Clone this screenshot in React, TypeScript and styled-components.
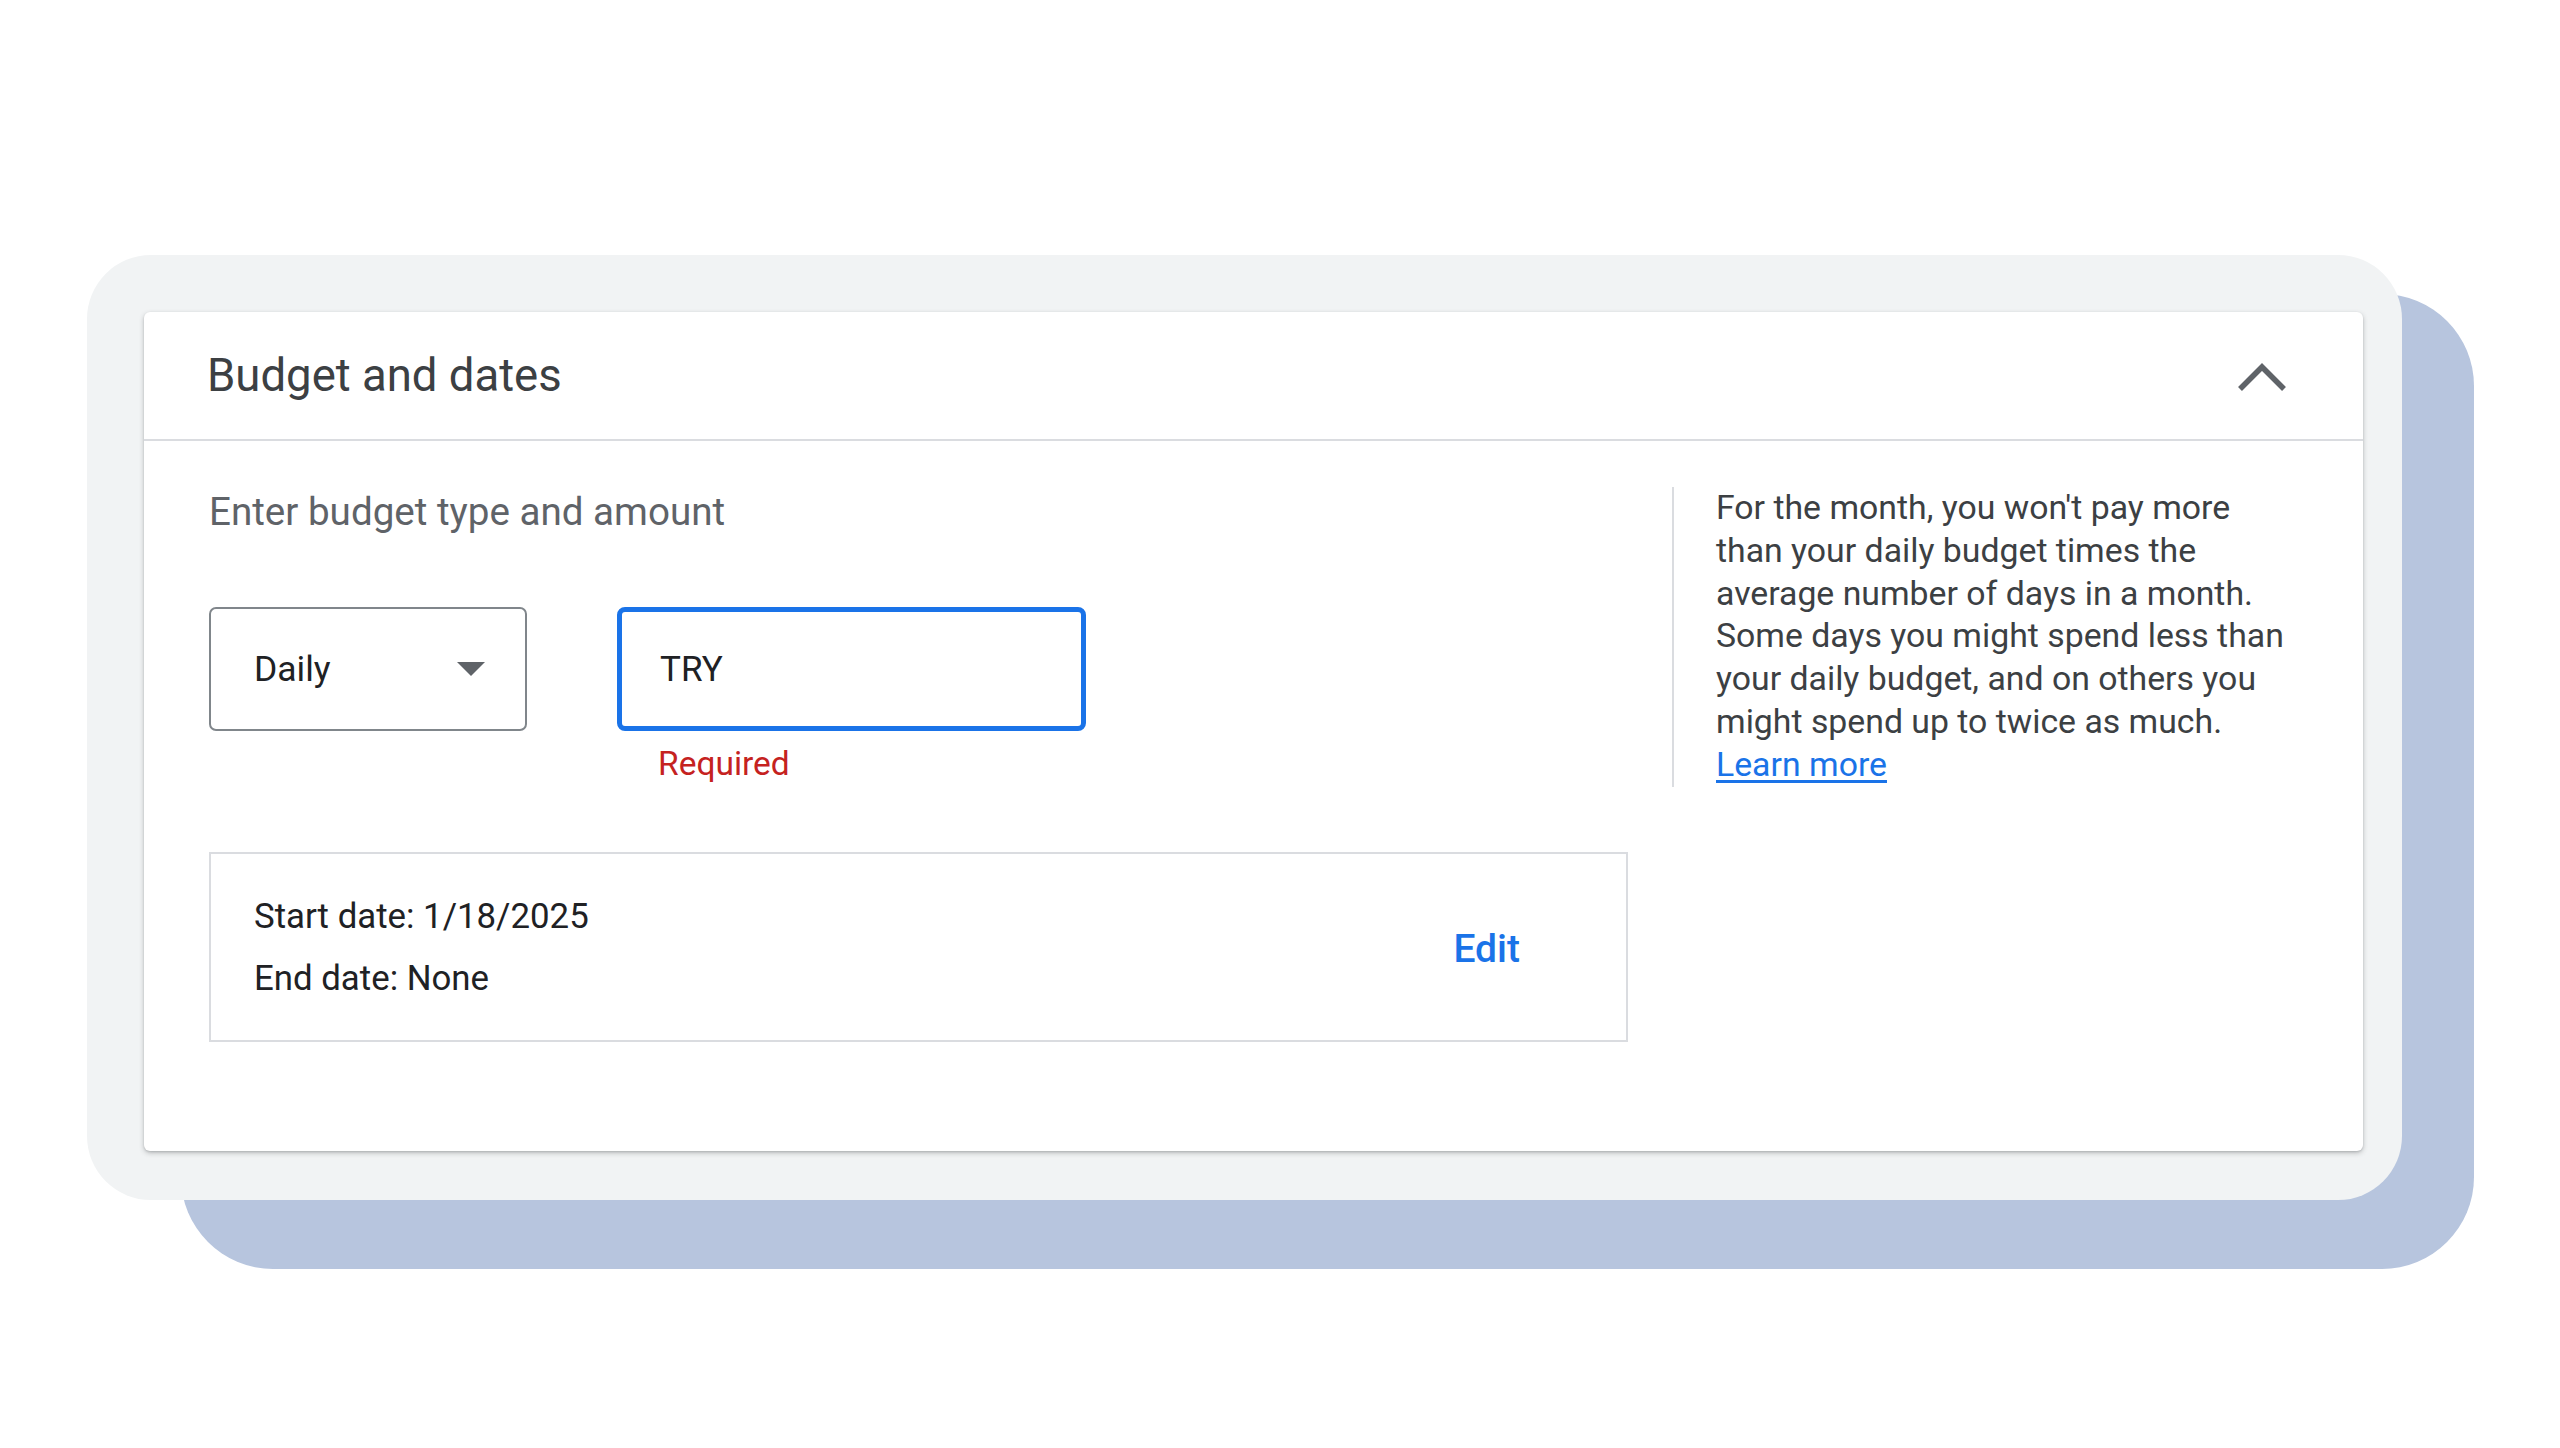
import React from "react";
import styled, { createGlobalStyle } from "styled-components";

const Global = createGlobalStyle`
  html, body {
    margin: 0;
    padding: 0;
    background: #ffffff;
    font-family: Roboto, "Liberation Sans", Arial, sans-serif;
  }
  * { box-sizing: border-box; }
`;

const Page = styled.div`
  min-height: 1448px;
  padding: 255px 0 0 87px;
`;

const Stack = styled.div`
  position: relative;
  width: 2315px;
`;

const Backdrop = styled.div`
  position: absolute;
  left: 94px;
  top: 39px;
  right: -72px;
  bottom: -69px;
  background: #b7c5de;
  border-radius: 92px;
  z-index: 0;
`;

const Panel = styled.section`
  position: relative;
  z-index: 1;
  background: #f1f3f4;
  border-radius: 64px;
  padding: 57px 39px 49px 57px;
`;

const Card = styled.div`
  background: #ffffff;
  border-radius: 6px;
  box-shadow: 0 2px 5px rgba(60, 64, 67, 0.3), 0 1px 2px rgba(60, 64, 67, 0.15);
`;

const Header = styled.div`
  display: flex;
  align-items: center;
  justify-content: space-between;
  height: 129px;
  padding: 0 75px 0 63px;
  border-bottom: 2px solid #dadce0;
`;

const Title = styled.h2`
  margin: 0;
  font-family: Roboto, "Liberation Sans", sans-serif;
  font-weight: 400;
  font-size: 45.5px;
  line-height: 1;
  color: #3c4043;
`;

const CollapseButton = styled.button`
  display: flex;
  align-items: center;
  justify-content: center;
  width: 52px;
  height: 40px;
  padding: 0;
  border: none;
  background: none;
  color: #5f6368;
`;

const Body = styled.div`
  display: flex;
  align-items: flex-start;
  padding: 46px 69px 109px 65px;
`;

const LeftCol = styled.div`
  width: 1419px;
  display: flex;
  flex-direction: column;
`;

const Subtitle = styled.p`
  margin: 0;
  font-size: 38.6px;
  line-height: 49px;
  color: #5f6368;
`;

const FieldRow = styled.div`
  display: flex;
  align-items: flex-start;
  gap: 90px;
  margin-top: 71px;
`;

const Select = styled.div`
  width: 318px;
  height: 124px;
  display: flex;
  align-items: center;
  justify-content: space-between;
  padding: 0 40px 0 43px;
  border: 2px solid #80868b;
  border-radius: 7px;
  font-size: 35.5px;
  color: #202124;
`;

const AmountField = styled.div`
  display: flex;
  flex-direction: column;
`;

const InputBox = styled.div`
  width: 469px;
  height: 124px;
  display: flex;
  align-items: center;
  padding-left: 38px;
  border: 5px solid #1a73e8;
  border-radius: 8px;
  font-size: 35px;
  color: #202124;
`;

const ErrorText = styled.div`
  margin-top: 13px;
  padding-left: 41px;
  font-size: 33.5px;
  line-height: 40px;
  color: #c5221f;
`;

const DateBox = styled.div`
  margin-top: 68px;
  height: 190px;
  display: flex;
  align-items: center;
  justify-content: space-between;
  padding: 0 106px 0 43px;
  border: 2px solid #dadce0;
`;

const DateLines = styled.div`
  font-size: 34.8px;
  line-height: 62px;
  color: #202124;
`;

const EditButton = styled.button`
  padding: 0;
  border: none;
  background: none;
  font-family: Roboto, "Liberation Sans", sans-serif;
  font-weight: 500;
  font-size: 39px;
  color: #1a73e8;
  margin-top: 4px;
`;

const Aside = styled.aside`
  margin-left: 44px;
  padding-left: 42px;
  border-left: 2px solid #dadce0;
  font-size: 33.8px;
  line-height: 42.8px;
  color: #3c4043;
  white-space: nowrap;
`;

const LearnMore = styled.a`
  color: #1a73e8;
  text-decoration: underline;
  text-underline-offset: 4px;
`;

export default function App() {
  return (
    <>
      <Global />
      <Page>
        <Stack>
          <Backdrop />
          <Panel>
            <Card>
              <Header>
                <Title>Budget and dates</Title>
                <CollapseButton aria-label="Collapse">
                  <svg width="52" height="36" viewBox="0 0 52 36">
                    <polyline
                      points="4,31 26,9 48,31"
                      fill="none"
                      stroke="currentColor"
                      strokeWidth="5.5"
                    />
                  </svg>
                </CollapseButton>
              </Header>
              <Body>
                <LeftCol>
                  <Subtitle>Enter budget type and amount</Subtitle>
                  <FieldRow>
                    <Select>
                      <span>Daily</span>
                      <svg width="28" height="14" viewBox="0 0 28 14">
                        <polygon points="0,0 28,0 14,14" fill="#5f6368" />
                      </svg>
                    </Select>
                    <AmountField>
                      <InputBox>TRY</InputBox>
                      <ErrorText>Required</ErrorText>
                    </AmountField>
                  </FieldRow>
                  <DateBox>
                    <DateLines>
                      <div>Start date: 1/18/2025</div>
                      <div>End date: None</div>
                    </DateLines>
                    <EditButton>Edit</EditButton>
                  </DateBox>
                </LeftCol>
                <Aside>
                  For the month, you won't pay more
                  <br />
                  than your daily budget times the
                  <br />
                  average number of days in a month.
                  <br />
                  Some days you might spend less than
                  <br />
                  your daily budget, and on others you
                  <br />
                  might spend up to twice as much.
                  <br />
                  <LearnMore href="#">Learn more</LearnMore>
                </Aside>
              </Body>
            </Card>
          </Panel>
        </Stack>
      </Page>
    </>
  );
}
